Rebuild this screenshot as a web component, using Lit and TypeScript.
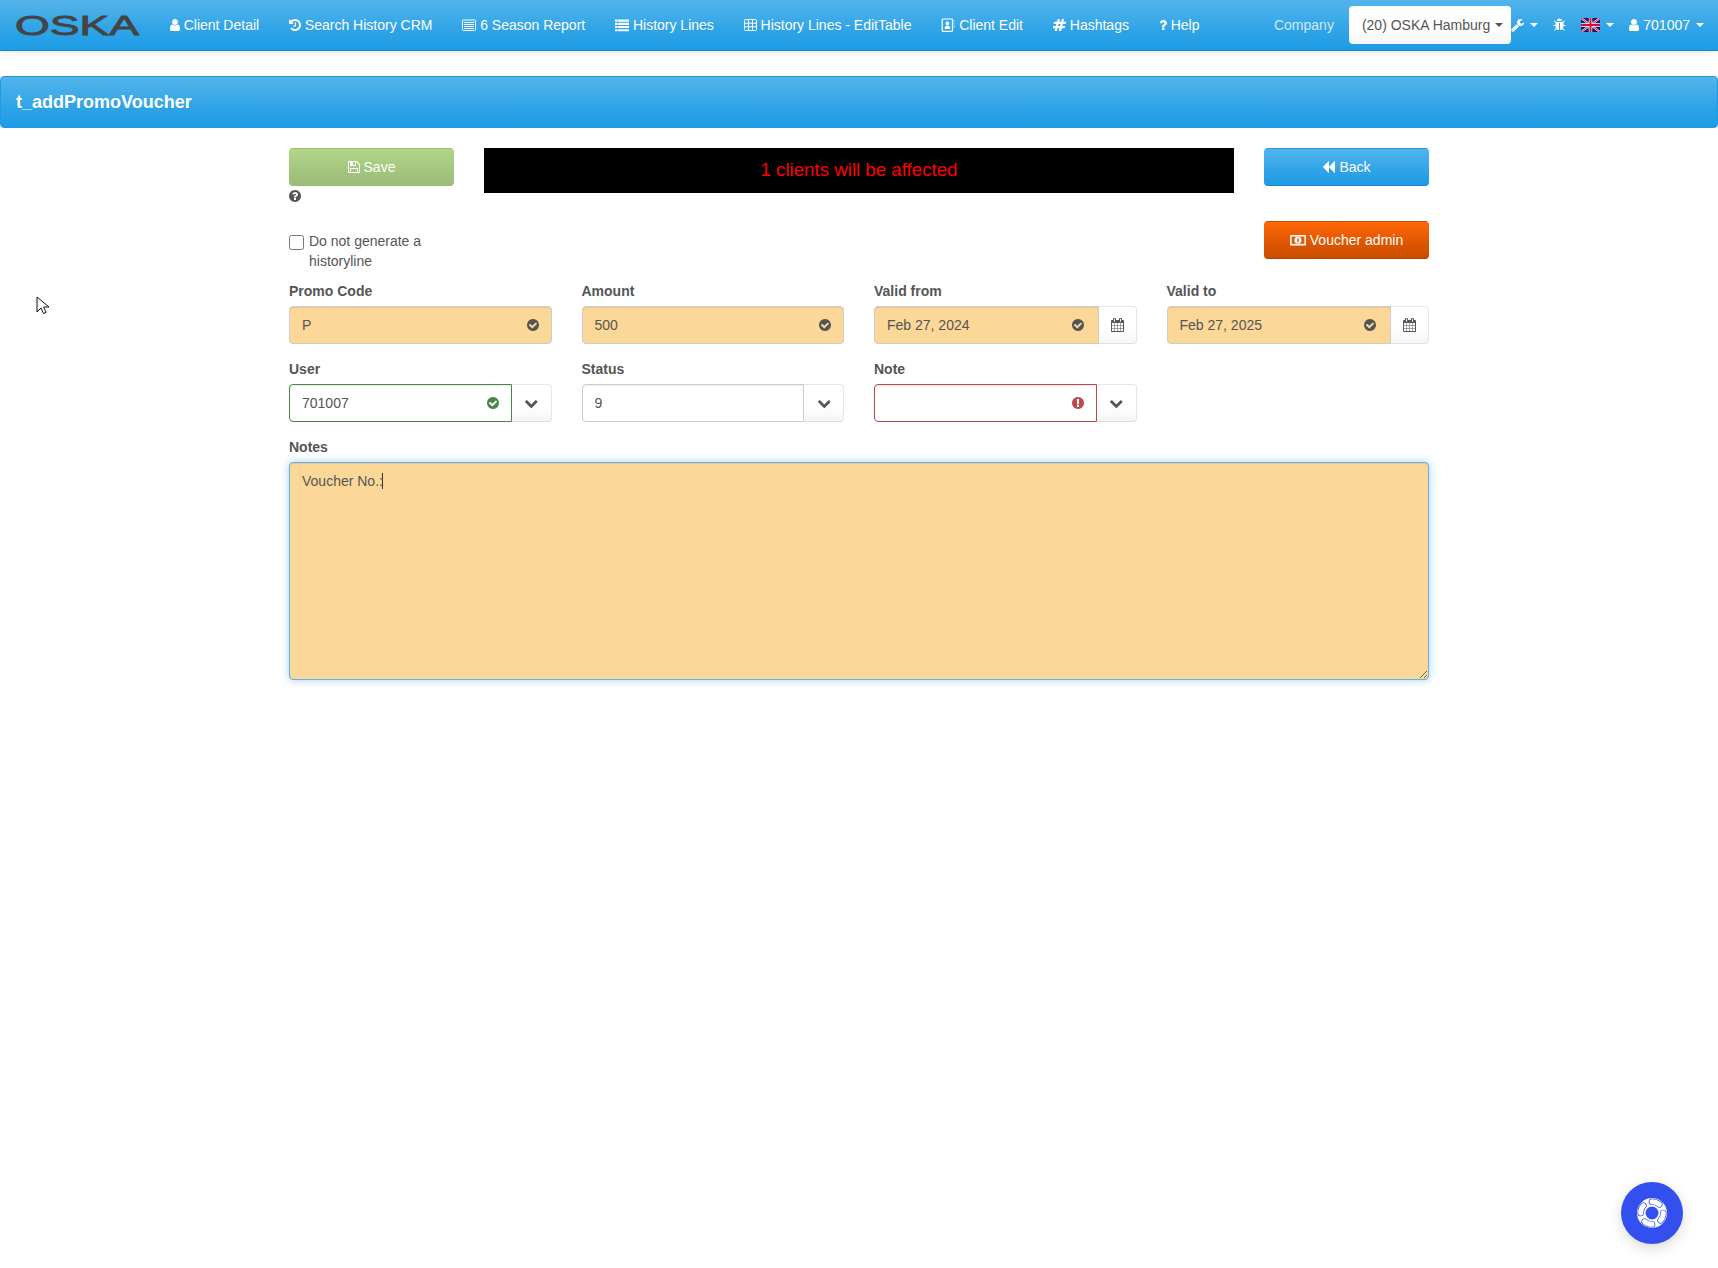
import {LitElement, css, html, svg} from 'lit';
import {customElement} from 'lit/decorators.js';

// font-awesome 4 outlines, [left edge, width, path] in the 1792 grid
const PATHS: Record<string, [number, number, string]> = {
  user: [256, 1280, 'M1536 1399q0 109-62.5 187t-150.5 78h-854q-88 0-150.5-78t-62.5-187q0-85 8.5-160.5t31.5-152 58.5-131 94-89 134.5-34.5q131 128 313 128t313-128q76 0 134.5 34.5t94 89 58.5 131 31.5 152 8.5 160.5zm-256-887q0 159-112.5 271.5t-271.5 112.5-271.5-112.5-112.5-271.5 112.5-271.5 271.5-112.5 271.5 112.5 112.5 271.5z'],
  history: [128, 1536, 'M1664 896q0 156-61 298t-164 245-245 164-298 61q-172 0-327-72.5t-264-204.5q-7-10-6.5-22.5t8.5-20.5l137-138q10-9 25-9 16 2 23 12 73 95 179 147t225 52q104 0 198.5-40.5t163.5-109.5 109.5-163.5 40.5-198.5-40.5-198.5-109.5-163.5-163.5-109.5-198.5-40.5q-98 0-188 35.5t-160 101.5l137 138q31 30 14 69-17 40-59 40h-448q-26 0-45-19t-19-45v-448q0-42 40-59 39-17 69 14l130 129q107-101 244.5-156.5t284.5-55.5q156 0 298 61t245 164 164 245 61 298zm-640-288v448q0 14-9 23t-23 9h-320q-14 0-23-9t-9-23v-64q0-14 9-23t23-9h224v-352q0-14 9-23t23-9h64q14 0 23 9t9 23z'],
  hashtag: [80, 1680, 'M991 1024l64-256h-254l-64 256h254zm768-504l-56 224q-7 24-31 24h-327l-64 256h311q15 0 25 12 10 14 6 28l-56 224q-5 24-31 24h-327l-81 328q-7 24-31 24h-224q-16 0-26-12-9-12-6-28l78-312h-254l-81 328q-7 24-31 24h-225q-15 0-25-12-9-12-6-28l78-312h-311q-15 0-25-12-9-12-6-28l56-224q7-24 31-24h327l64-256h-311q-15 0-25-12-10-14-6-28l56-224q5-24 31-24h327l81-328q7-24 32-24h224q15 0 25 12 9 12 6 28l-78 312h254l81-328q7-24 32-24h224q15 0 25 12 9 12 6 28l-78 312h311q15 0 25 12 9 12 6 28z'],
  question: [384, 1024, 'M1088 1256v240q0 16-12 28t-28 12h-240q-16 0-28-12t-12-28v-240q0-16 12-28t28-12h240q16 0 28 12t12 28zm316-600q0 54-15.5 101t-35 76.5-55 59.5-57.5 43.5-61 35.5q-41 23-68.5 65t-27.5 67q0 17-12 32.5t-28 15.5h-240q-15 0-25.5-18.5t-10.5-37.5v-45q0-83 65-156.5t143-108.5q59-27 84-56t25-76q0-42-46.5-74t-107.5-32q-65 0-108 29-35 25-107 115-13 16-31 16-12 0-25-8l-164-125q-13-10-15.5-25t5.5-28q160-266 464-266 80 0 161 31t146 83 106 127.5 41 158.5z'],
  wrench: [64, 1664, 'M448 1472q0-26-19-45t-45-19-45 19-19 45 19 45 45 19 45-19 19-45zm644-420l-682 682q-37 37-90 37-52 0-91-37l-106-108q-38-36-38-90 0-53 38-91l681-681q39 98 114.5 173.5t173.5 114.5zm634-435q0 39-23 106-47 134-164.5 217.5t-258.5 83.5q-185 0-316.5-131.5t-131.5-316.5 131.5-316.5 316.5-131.5q58 0 121.5 16.5t107.5 46.5q16 11 16 28t-16 28l-293 169v224l193 107q5-3 79-48.5t135.5-81 70.5-35.5q15 0 23.5 10t8.5 25z'],
  bug: [64, 1664, 'M1696 960q0 26-19 45t-45 19h-224q0 171-67 290l208 209q19 19 19 45t-19 45q-18 19-45 19t-45-19l-198-197q-5 5-15 13t-42 28.5-65 36.5-82 29-97 13v-896h-128v896q-51 0-101.5-13.5t-87-33-66-39-43.5-32.5l-15-14-183 207q-20 21-48 21-24 0-43-16-19-18-20.5-44.5t15.5-46.5l202-227q-58-114-58-274h-224q-26 0-45-19t-19-45 19-45 45-19h224v-294l-173-173q-19-19-19-45t19-45 45-19 45 19l173 173h844l173-173q19-19 45-19t45 19 19 45-19 45l-173 173v294h224q26 0 45 19t19 45zm-480-576h-640q0-133 93.5-226.5t226.5-93.5 226.5 93.5 93.5 226.5z'],
  check: [128, 1536, 'M1412 734q0-28-18-46l-91-90q-19-19-45-19t-45 19l-408 407-226-226q-19-19-45-19t-45 19l-91 90q-18 18-18 46 0 27 18 45l362 362q19 19 45 19 27 0 46-19l543-543q18-18 18-45zm252 162q0 209-103 385.5t-279.5 279.5-385.5 103-385.5-103-279.5-279.5-103-385.5 103-385.5 279.5-279.5 385.5-103 385.5 103 279.5 279.5 103 385.5z'],
  help: [128, 1536, 'M1024 1376v-192q0-14-9-23t-23-9h-192q-14 0-23 9t-9 23v192q0 14 9 23t23 9h192q14 0 23-9t9-23zm256-672q0-88-55.5-163t-138.5-116-170-41q-243 0-371 213-15 24 8 42l132 100q7 6 19 6 16 0 25-12 53-68 86-92 34-24 86-24 48 0 85.5 26t37.5 59q0 38-20 61t-68 45q-63 28-115.5 86.5t-52.5 125.5v36q0 14 9 23t23 9h192q14 0 23-9t9-23q0-19 21.5-49.5t54.5-49.5q32-18 49-28.5t46-35 44.5-48 28-60.5 12.5-81zm384 192q0 209-103 385.5t-279.5 279.5-385.5 103-385.5-103-279.5-279.5-103-385.5 103-385.5 279.5-279.5 385.5-103 385.5 103 279.5 279.5 103 385.5z'],
  alert: [128, 1536, 'M896 128q209 0 385.5 103t279.5 279.5 103 385.5-103 385.5-279.5 279.5-385.5 103-385.5-103-279.5-279.5-103-385.5 103-385.5 279.5-279.5 385.5-103zm128 1247v-190q0-14-9-23.5t-22-9.5h-192q-13 0-23 10t-10 23v190q0 13 10 23t23 10h192q13 0 22-9.5t9-23.5zm-2-344l18-621q0-12-10-18-10-8-24-8h-220q-14 0-24 8-10 6-10 18l17 621q0 10 10 17.5t24 7.5h185q14 0 23.5-7.5t10.5-17.5z'],
  chevron: [90, 1612, 'M1683 808l-742 741q-19 19-45 19t-45-19l-742-741q-19-19-19-45.5t19-45.5l166-165q19-19 45-19t45 19l531 531 531-531q19-19 45-19t45 19l166 165q19 19 19 45.5t-19 45.5z'],
  backward: [64, 1664, 'M1683 141q19-19 32-13t13 32v1472q0 26-13 32t-32-13l-710-710q-9-9-13-19v710q0 26-13 32t-32-13l-710-710q-19-19-19-45t19-45l710-710q19-19 32-13t13 32v710q4-10 13-19z'],
  calendar: [64, 1664, 'M192 1664h288v-288h-288v288zm352 0h320v-288h-320v288zm-352-352h288v-320h-288v320zm352 0h320v-320h-320v320zm-352-384h288v-288h-288v288zm736 736h320v-288h-320v288zm-384-736h320v-288h-320v288zm768 736h288v-288h-288v288zm-384-352h320v-320h-320v320zm-352-864v-288q0-13-9.5-22.5t-22.5-9.5h-64q-13 0-22.5 9.5t-9.5 22.5v288q0 13 9.5 22.5t22.5 9.5h64q13 0 22.5-9.5t9.5-22.5zm736 864h288v-320h-288v320zm-384-384h320v-288h-320v288zm384 0h288v-288h-288v288zm32-480v-288q0-13-9.5-22.5t-22.5-9.5h-64q-13 0-22.5 9.5t-9.5 22.5v288q0 13 9.5 22.5t22.5 9.5h64q13 0 22.5-9.5t9.5-22.5zm384-64v1280q0 52-38 90t-90 38h-1408q-52 0-90-38t-38-90v-1280q0-52 38-90t90-38h128v-96q0-66 47-113t113-47h64q66 0 113 47t47 113v96h384v-96q0-66 47-113t113-47h64q66 0 113 47t47 113v96h128q52 0 90 38t38 90z'],
  save: [128, 1536, 'M512 1536h768v-384h-768v384zm896 0h128v-896q0-14-10-38.5t-20-34.5l-281-281q-10-10-34-20t-39-10v416q0 40-28 68t-68 28h-576q-40 0-68-28t-28-68v-416h-128v1280h128v-416q0-40 28-68t68-28h832q40 0 68 28t28 68v416zm-384-928v-320q0-13-9.5-22.5t-22.5-9.5h-192q-13 0-22.5 9.5t-9.5 22.5v320q0 13 9.5 22.5t22.5 9.5h192q13 0 22.5-9.5t9.5-22.5zm640 32v928q0 40-28 68t-68 28h-1344q-40 0-68-28t-28-68v-1344q0-40 28-68t68-28h928q40 0 88 20t76 48l280 280q28 28 48 76t20 88z'],
};

const fa = (name: string) => {
  const [x, w, d] = PATHS[name];
  return html`<svg class="ic" style="width:${(w * 14) / 1792}px" viewBox="${x} 0 ${w} 1792" fill="currentColor"><path d=${d}></path></svg>`;
};

// icons drawn by hand from plain shapes, all on a 14px grid
const listIcon = html`<svg class="ic" style="width:14px" viewBox="0 0 14 14" fill="currentColor">
  <path d="M0 1.6h14v2.1H0zM0 4.8h14v2.1H0zM0 8h14v2.1H0zM0 11.2h14v2.1H0z"></path>
  <path d="M2.6 1.6h.5v11.7h-.5z" fill="#2ba2e6"></path></svg>`;
const listAltIcon = html`<svg class="ic" style="width:14px" viewBox="0 0 14 14" fill="none" stroke="currentColor">
  <rect x=".5" y="2" width="13" height="10.5" rx="1"></rect>
  <path d="M2 4.5h10M2 6.5h10M2 8.5h10M2 10.5h10"></path></svg>`;
const tableIcon = html`<svg class="ic" style="width:13px" viewBox="0 0 13 14" fill="none" stroke="currentColor">
  <rect x=".5" y="1.5" width="12" height="11" rx="1"></rect>
  <path d="M4.5 2v10M8.5 2v10M1 5.2h11M1 8.8h11"></path></svg>`;
const contactIcon = html`<svg class="ic" style="width:14px" viewBox="0 0 14 14">
  <rect x="1.2" y="1" width="10.3" height="12.4" rx=".8" fill="none" stroke="currentColor" stroke-width="1.2"></rect>
  <circle cx="6.4" cy="5.4" r="1.8" fill="currentColor"></circle>
  <path d="M3.6 11c0-2.3 1-3.4 2.8-3.4s2.8 1.1 2.8 3.4z" fill="currentColor"></path>
  <path d="M12.4 3h1.2M12.4 6h1.2M12.4 9h1.2" stroke="currentColor"></path></svg>`;
const moneyIcon = html`<svg class="ic" style="width:16px" viewBox="0 0 16 14">
  <rect x="0" y="2" width="16" height="10.4" rx=".6" fill="currentColor"></rect>
  <rect x="1.6" y="3.6" width="12.8" height="7.2" fill="#e35a02"></rect>
  <circle cx="8" cy="7.2" r="3.4" fill="currentColor"></circle>
  <rect x="7.3" y="5.2" width="1.5" height="4" fill="#e35a02"></rect></svg>`;
const flagIcon = html`<svg class="flag" viewBox="0 0 19 14">
  <rect width="19" height="14" fill="#0a1c78"></rect>
  <path d="M0 0l19 14M19 0L0 14" stroke="#fff" stroke-width="2"></path>
  <path d="M0 0l19 14M19 0L0 14" stroke="#d21034" stroke-width="1"></path>
  <path d="M9.5 0v14M0 7h19" stroke="#fff" stroke-width="3.4"></path>
  <path d="M9.5 0v14M0 7h19" stroke="#d21034" stroke-width="2"></path></svg>`;

const NAV = [
  {icon: fa('user'), label: 'Client Detail'},
  {icon: fa('history'), label: 'Search History CRM'},
  {icon: listAltIcon, label: '6 Season Report'},
  {icon: listIcon, label: 'History Lines'},
  {icon: tableIcon, label: 'History Lines - EditTable'},
  {icon: contactIcon, label: 'Client Edit'},
  {icon: fa('hashtag'), label: 'Hashtags'},
  {icon: fa('question'), label: 'Help'},
];

const ringPads = [0, 90, 180, 270].map(
  (a) => svg`<g transform="rotate(${a + 20} 16 16)">
    <path d="M12 5.4a11.2 11.2 0 0 1 8 0" fill="none" stroke="#3350ee" stroke-width="6.4" stroke-linecap="round"></path>
    <path d="M12 5.4a11.2 11.2 0 0 1 8 0" fill="none" stroke="#fff" stroke-width="5" stroke-linecap="round"></path>
  </g>`,
);

interface Field {
  label: string;
  value: string;
  tone: 'warn' | 'plain' | 'ok' | 'bad';
  addon?: 'calendar' | 'chevron';
  mark?: string;
}

const FIELDS: Field[] = [
  {label: 'Promo Code', value: 'P', tone: 'warn', mark: 'check'},
  {label: 'Amount', value: '500', tone: 'warn', mark: 'check'},
  {label: 'Valid from', value: 'Feb 27, 2024', tone: 'warn', mark: 'check', addon: 'calendar'},
  {label: 'Valid to', value: 'Feb 27, 2025', tone: 'warn', mark: 'check', addon: 'calendar'},
  {label: 'User', value: '701007', tone: 'ok', mark: 'check', addon: 'chevron'},
  {label: 'Status', value: '9', tone: 'plain', addon: 'chevron'},
  {label: 'Note', value: '', tone: 'bad', mark: 'alert', addon: 'chevron'},
];

@customElement('app-root')
export class AppRoot extends LitElement {
  static styles = css`
    :host {
      display: block;
      position: relative;
      min-height: 1268px;
      background: #fff;
      color: #555;
      font: 14px/20px 'Liberation Sans', Arial, sans-serif;
    }

    * {
      box-sizing: border-box;
    }

    .ic {
      flex: none;
      height: 14px;
    }

    .navbar {
      display: flex;
      align-items: center;
      height: 51px;
      padding-right: 14px;
      border-bottom: 1px solid #178acc;
      background: linear-gradient(#54b4eb, #2fa4e7 60%, #1d9ce5);
      box-shadow: 0 1px 10px rgba(0, 0, 0, 0.1);
      color: #fff;
      text-shadow: 0 1px 0 rgba(0, 0, 0, 0.05);
    }

    .logo {
      flex: none;
      width: 124px;
      height: 20px;
      margin: 0 16px 0 15px;
      overflow: visible;
    }

    .logo text {
      fill: #444;
      font: 400 27px 'Liberation Sans', Arial, sans-serif;
      stroke: #444;
      stroke-width: 0.8;
    }

    .link {
      display: flex;
      align-items: center;
      gap: 3.7px;
      padding: 0 15px;
      white-space: nowrap;
    }

    .right {
      display: flex;
      align-items: center;
      margin-left: auto;
    }

    .company {
      margin-right: 15px;
      color: #d1e9f8;
    }

    .picker {
      display: flex;
      align-items: center;
      gap: 5px;
      height: 38px;
      padding: 0 8px 0 13px;
      border-radius: 4px;
      background: linear-gradient(#fff, #fff 60%, #f5f5f5);
      color: #555;
      text-shadow: none;
    }

    .caret {
      flex: none;
      width: 0;
      height: 0;
      border-top: 4px solid currentColor;
      border-left: 4px solid transparent;
      border-right: 4px solid transparent;
    }

    .tool {
      display: flex;
      align-items: center;
      gap: 6px;
      padding-right: 15px;
    }

    .tool:last-child {
      padding-right: 0;
    }

    .flag {
      flex: none;
      width: 19px;
      height: 14px;
    }

    .user-tool {
      display: flex;
      align-items: center;
      gap: 4px;
    }

    .panel {
      display: flex;
      align-items: center;
      height: 52px;
      margin-top: 25px;
      padding: 0 15px;
      border: 1px solid #1d9ce5;
      border-radius: 4px;
      background: linear-gradient(#54b4eb, #2fa4e7 60%, #1d9ce5);
      color: #fff;
      font-size: 18px;
      font-weight: 700;
      text-shadow: 0 1px 0 rgba(0, 0, 0, 0.05);
    }

    .content {
      width: 1140px;
      margin: 20px auto 0;
    }

    .top {
      display: grid;
      grid-template-columns: 165px 750px 165px;
      column-gap: 30px;
    }

    .btn {
      display: flex;
      align-items: center;
      justify-content: center;
      gap: 4px;
      height: 38px;
      border: 1px solid transparent;
      border-radius: 4px;
      color: #fff;
      text-shadow: 0 1px 0 rgba(0, 0, 0, 0.05);
    }

    .btn.save {
      border-bottom-color: #6a9c34;
      background: linear-gradient(#88c149, #73a839 60%, #699934);
      opacity: 0.65;
    }

    .btn.back {
      border-bottom-color: #178acc;
      background: linear-gradient(#54b4eb, #2fa4e7 60%, #1d9ce5);
    }

    .btn.voucher {
      border-bottom-color: #b14400;
      background: linear-gradient(#ff6707, #dd5600 60%, #c94e00);
    }

    .hint {
      display: block;
      height: 20px;
      padding-top: 3px;
    }

    .hint .ic {
      display: block;
    }

    .banner {
      display: flex;
      align-items: center;
      justify-content: center;
      height: 45px;
      padding-bottom: 2px;
      background: #000;
      color: #f00;
      font-size: 18.7px;
    }

    .second {
      display: grid;
      grid-template-columns: 165px 1fr 165px;
      column-gap: 30px;
      margin-top: 15px;
      height: 60px;
    }

    .check {
      display: flex;
      align-items: flex-start;
      gap: 5px;
      padding-top: 10px;
    }

    .check input {
      flex: none;
      width: 15px;
      height: 15px;
      margin: 4px 0 0;
    }

    .check span {
      max-width: 130px;
    }

    .fields {
      display: grid;
      grid-template-columns: repeat(4, 262.5px);
      column-gap: 30px;
      row-gap: 15px;
    }

    label.name {
      display: block;
      margin-bottom: 5px;
      font-weight: 700;
    }

    .group {
      display: flex;
      height: 38px;
    }

    .control {
      position: relative;
      flex: 1;
      min-width: 0;
    }

    .control input {
      display: block;
      width: 100%;
      height: 38px;
      padding: 8px 34px 8px 12px;
      border: 1px solid #ccc;
      border-radius: 4px;
      outline: none;
      background: #fff;
      box-shadow: inset 0 1px 1px rgba(0, 0, 0, 0.075);
      color: #555;
      font: inherit;
    }

    .joined input {
      border-radius: 4px 0 0 4px;
    }

    .warn input {
      background: #fbd798;
    }

    .ok input {
      border-color: #468847;
    }

    .bad input {
      border-color: #b94a48;
    }

    .mark {
      position: absolute;
      top: 12px;
      right: 13px;
      display: flex;
      color: #555;
    }

    .joined .warn .mark {
      right: 15px;
    }

    .ok .mark {
      color: #468847;
    }

    .bad .mark {
      color: #b94a48;
    }

    .addon {
      display: flex;
      flex: none;
      align-items: center;
      justify-content: center;
      border: 1px solid #e6e6e6;
      border-left: none;
      border-bottom-color: #dedede;
      border-radius: 0 4px 4px 0;
      background: linear-gradient(#fff, #fff 60%, #f5f5f5);
      color: #555;
    }

    .addon.calendar {
      width: 38px;
    }

    .addon.chevron {
      width: 40px;
      padding-left: 1px;
    }

    .notes {
      position: relative;
      margin-top: 15px;
    }

    textarea {
      display: block;
      width: 100%;
      height: 218px;
      padding: 8px 12px;
      border: 1px solid #66afe9;
      border-radius: 4px;
      outline: none;
      background: #fbd798;
      box-shadow: inset 0 1px 1px rgba(0, 0, 0, 0.075), 0 0 8px rgba(102, 175, 233, 0.6);
      color: #555;
      font: inherit;
      resize: vertical;
    }

    .text-caret {
      position: absolute;
      top: 36px;
      left: 93px;
      width: 1px;
      height: 16px;
      background: #333;
    }

    .fab {
      position: absolute;
      right: 35px;
      top: 1182px;
      display: flex;
      align-items: center;
      justify-content: center;
      width: 62px;
      height: 62px;
      border-radius: 50%;
      background: #3350ee;
      box-shadow: 0 4px 14px rgba(0, 0, 0, 0.15);
    }

    .fab svg {
      width: 32px;
      height: 32px;
    }

    .pointer {
      position: absolute;
      top: 296px;
      left: 36px;
      width: 14px;
      height: 19px;
    }
  `;

  renderField(f: Field) {
    return html`
      <div>
        <label class="name">${f.label}</label>
        <div class="group ${f.addon ? 'joined' : ''}">
          <div class="control ${f.tone}">
            <input .value=${f.value}>
            ${f.mark ? html`<span class="mark">${fa(f.mark)}</span>` : ''}
          </div>
          ${f.addon ? html`<div class="addon ${f.addon}">${fa(f.addon)}</div>` : ''}
        </div>
      </div>
    `;
  }

  render() {
    return html`
      <nav class="navbar">
        <svg class="logo" viewBox="0 0 124 20">
          <text x="0" y="19.5" textLength="124" lengthAdjust="spacingAndGlyphs">OSKA</text>
        </svg>
        ${NAV.map((n) => html`<a class="link">${n.icon}<span>${n.label}</span></a>`)}
        <div class="right">
          <span class="company">Company</span>
          <div class="picker"><span>(20) OSKA Hamburg</span><i class="caret"></i></div>
          <a class="tool">${fa('wrench')}<i class="caret"></i></a>
          <a class="tool">${fa('bug')}</a>
          <a class="tool">${flagIcon}<i class="caret"></i></a>
          <a class="tool"><span class="user-tool">${fa('user')}<span>701007</span></span><i class="caret"></i></a>
        </div>
      </nav>

      <div class="panel">t_addPromoVoucher</div>

      <div class="content">
        <div class="top">
          <div>
            <div class="btn save">${fa('save')}<span>Save</span></div>
            <span class="hint">${fa('help')}</span>
          </div>
          <div class="banner">1 clients will be affected</div>
          <div class="btn back">${fa('backward')}<span>Back</span></div>
        </div>
        <div class="second">
          <label class="check"><input type="checkbox"><span>Do not generate a historyline</span></label>
          <div></div>
          <div class="btn voucher">${moneyIcon}<span>Voucher admin</span></div>
        </div>
        <div class="fields">${FIELDS.map((f) => this.renderField(f))}</div>
        <div class="notes">
          <label class="name">Notes</label>
          <textarea .value=${'Voucher No.:'}></textarea>
          <i class="text-caret"></i>
        </div>
      </div>

      <svg class="pointer" viewBox="0 0 14 19">
        <path d="M1 1v15l4-4 2.5 5.5 2.6-1.2L7.6 11H13z" fill="#fff" stroke="#111" stroke-width="1"></path>
      </svg>

      <div class="fab">
        <svg viewBox="0 0 32 32">
          <circle cx="16" cy="16" r="15" fill="#fff"></circle>
          ${ringPads}
          <circle cx="16" cy="16" r="6.5" fill="#3350ee"></circle>
        </svg>
      </div>
    `;
  }
}

declare global {
  interface HTMLElementTagNameMap {
    'app-root': AppRoot;
  }
}
